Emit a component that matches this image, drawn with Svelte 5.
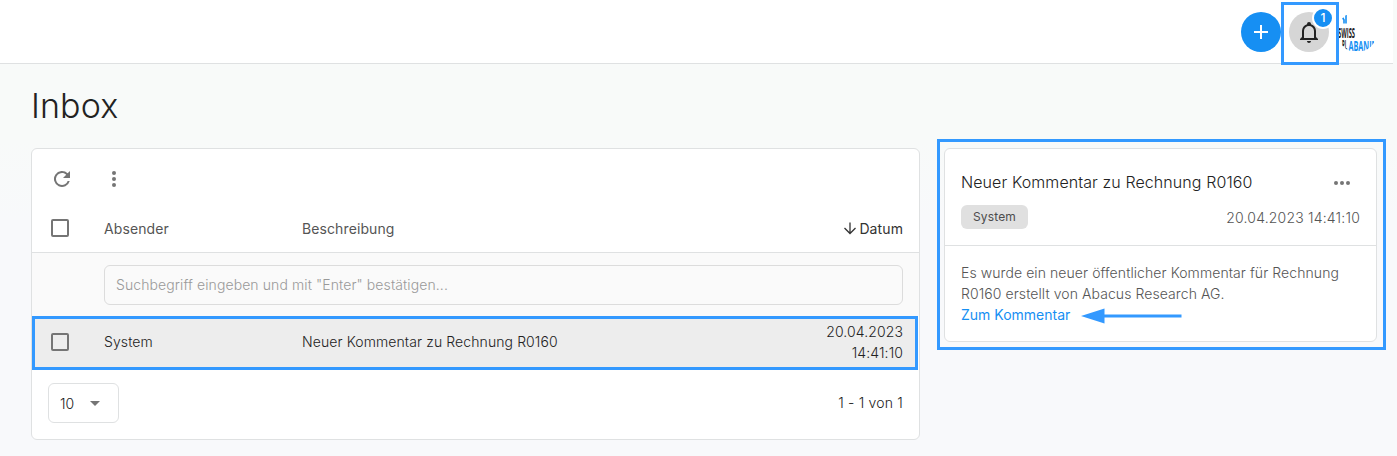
<script>
    const columns = ['Absender', 'Beschreibung'];

    const message = {
        sender: 'System',
        title: 'Neuer Kommentar zu Rechnung R0160',
        date: '20.04.2023',
        time: '14:41:10',
        body: 'Es wurde ein neuer öffentlicher Kommentar für Rechnung R0160 erstellt von Abacus Research AG.',
    };

    let search = '';
</script>

<div class="page">
    <header class="topbar">
        <button class="round add" aria-label="Neu">
            <svg width="40" height="40" viewBox="0 0 40 40">
                <path d="M20 13v14M13 20h14" stroke="#fff" stroke-width="2" />
            </svg>
        </button>
        <div class="bell-frame">
            <button class="round bell" aria-label="Benachrichtigungen">
                <svg width="24" height="24" viewBox="0 0 24 24">
                    <path fill="#222" d="M10 21h4c0 1.1-.9 2-2 2s-2-.9-2-2zM21 19v1H3v-1l2-2v-6c0-3.1 2-5.800 5-6.700V4a2 2 0 0 1 4 0v.3c3 .9 5 3.600 5 6.700v6l2 2zm-4-8a5 5 0 0 0-10 0v7h10v-7z" />
                </svg>
            </button>
            <span class="badge">1</span>
        </div>
        <svg class="logo" width="40" height="40" viewBox="0 0 40 40">
            <path d="M5.500 5.500l1.500 2.500M9 3v8.500M7 7.500v4" stroke="#168ff3" stroke-width="1.600" />
            <text x="1" y="25.500" textLength="17" lengthAdjust="spacingAndGlyphs" fill="#222">SWISS</text>
            <text x="5" y="37.500" textLength="5" lengthAdjust="spacingAndGlyphs" fill="#222">PL</text>
            <text x="11.500" y="38.500" textLength="29" lengthAdjust="spacingAndGlyphs" fill="#168ff3">ABANIN</text>
        </svg>
    </header>

    <main>
        <h1>Inbox</h1>
        <div class="columns">
            <section class="card inbox">
                <div class="toolbar">
                    <svg width="24" height="24" viewBox="0 0 24 24">
                        <path fill="#757575" d="M17.650 6.350A8 8 0 1 0 19.730 14h-2.080A6 6 0 1 1 12 6c1.660 0 3.140.69 4.220 1.780L13 11h7V4l-2.350 2.350z" />
                    </svg>
                    <svg width="24" height="24" viewBox="0 0 24 24" fill="#757575">
                        <circle cx="12" cy="6" r="2" /><circle cx="12" cy="12" r="2" /><circle cx="12" cy="18" r="2" />
                    </svg>
                </div>

                <div class="row head">
                    <span class="checkbox"></span>
                    {#each columns as column}
                        <span>{column}</span>
                    {/each}
                    <span class="date sorted">
                        <svg width="14" height="14" viewBox="0 0 14 14">
                            <path d="M7 1.500v11M1.500 7L7 12.500 12.500 7" fill="none" stroke="#333" stroke-width="1.300" />
                        </svg>
                        Datum
                    </span>
                </div>

                <div class="filter">
                    <input bind:value={search} placeholder={'Suchbegriff eingeben und mit "Enter" bestätigen...'} />
                </div>

                <div class="row entry">
                    <span class="checkbox"></span>
                    <span class="cell">{message.sender}</span>
                    <span class="cell">{message.title}</span>
                    <span class="date">{message.date}<br />{message.time}</span>
                </div>

                <div class="footer">
                    <div class="select">
                        10
                        <svg width="10" height="5" viewBox="0 0 10 5"><path d="M0 0h10L5 5z" fill="#757575" /></svg>
                    </div>
                    <span class="range">1 - 1 von 1</span>
                </div>
            </section>

            <div class="detail-frame">
                <article class="card detail">
                    <div class="detail-head">
                        <div class="line">
                            <h2>{message.title}</h2>
                            <svg class="more" width="18" height="6" viewBox="0 0 18 6" fill="#757575">
                                <circle cx="3" cy="3" r="2" /><circle cx="9" cy="3" r="2" /><circle cx="15" cy="3" r="2" />
                            </svg>
                        </div>
                        <div class="line meta">
                            <span class="chip">{message.sender}</span>
                            <span>{message.date} {message.time}</span>
                        </div>
                    </div>
                    <div class="detail-body">
                        <p>{message.body}</p>
                        <div class="link-line">
                            <a href="#kommentar">Zum Kommentar</a>
                            <svg width="101" height="16" viewBox="0 0 101 16">
                                <path d="M0 8L23.500.5v6h77v3h-77v6z" fill="#3399ff" />
                            </svg>
                        </div>
                    </div>
                </article>
            </div>
        </div>
    </main>
</div>

<style>
    :global(body) {
        background: #f8f9fb;
    }

    .page {
        height: 456px;
        overflow: hidden;
        font-family: Inter, sans-serif;
        font-size: 14px;
        line-height: 21px;
        letter-spacing: 0.1px;
        color: #4a4a4a;
        background: linear-gradient(#f8faf9 0 140px, #f8f9fb 220px);
    }

    .topbar {
        box-sizing: border-box;
        width: 1393px;
        height: 64px;
        padding-right: 16px;
        display: flex;
        justify-content: flex-end;
        align-items: flex-start;
        background: #fff;
        border-bottom: 1px solid #dfe1e2;
    }

    .round {
        width: 40px;
        height: 40px;
        padding: 0;
        border: 0;
        border-radius: 50%;
        display: flex;
        align-items: center;
        justify-content: center;
    }

    .add {
        margin-top: 12px;
        background: #168ff3;
    }

    .bell-frame {
        position: relative;
        z-index: 1;
        box-sizing: border-box;
        width: 58px;
        height: 63px;
        margin-top: 2px;
        padding: 7px 5px;
        border: 3px solid #3399ff;
    }

    .bell {
        background: #d6d6d6;
    }

    .badge {
        position: absolute;
        top: 2px;
        left: 28px;
        width: 18px;
        height: 18px;
        border: 2px solid #fff;
        border-radius: 50%;
        background: #168ff3;
        color: #fff;
        font-size: 12px;
        font-weight: 500;
        line-height: 18px;
        text-align: center;
    }

    .logo {
        margin: 12px 0 0 -2px;
        border-radius: 50%;
        overflow: hidden;
        font: bold 14px "Open Sans", sans-serif;
        letter-spacing: 0;
    }

    main {
        padding: 22px 11px 0 31px;
    }

    h1 {
        margin: 0;
        height: 53px;
        font-size: 34px;
        font-weight: 300;
        line-height: 40px;
        letter-spacing: 0.1px;
        color: #222;
    }

    .columns {
        display: flex;
        align-items: flex-start;
        gap: 17px;
    }

    .card {
        box-sizing: border-box;
        background: #fff;
        border: 1px solid #dfe1e2;
        border-radius: 6px;
    }

    .inbox {
        width: 889px;
        height: 292px;
        margin-top: 9px;
    }

    .toolbar {
        display: flex;
        gap: 28px;
        height: 42px;
        padding: 18px 18px 0;
    }

    .row {
        box-sizing: border-box;
        display: grid;
        grid-template-columns: 53px 198px 1fr 120px;
        align-items: center;
        padding: 0 16px 0 19px;
    }

    .head {
        height: 44px;
        padding-bottom: 5px;
        border-bottom: 1px solid #dfe1e2;
        color: #555;
    }

    .checkbox {
        box-sizing: border-box;
        width: 18px;
        height: 18px;
        border: 2px solid #757575;
        border-radius: 2px;
    }

    .date {
        text-align: right;
    }

    .sorted {
        display: flex;
        align-items: center;
        justify-content: flex-end;
        gap: 2px;
        color: #333;
    }

    .filter {
        height: 63px;
        box-sizing: border-box;
        padding: 12px 16px 0 72px;
        background: #fafafa;
    }

    input {
        box-sizing: border-box;
        width: 100%;
        height: 40px;
        padding: 0 11px 2px;
        border: 1px solid #dcdcdc;
        border-radius: 6px;
        background: transparent;
        font: inherit;
        font-weight: 300;
        letter-spacing: inherit;
    }

    input::placeholder {
        color: #999;
    }

    .entry {
        width: 886px;
        height: 54px;
        padding: 0 12px 2px 16px;
        background: #ededed;
        border: 3px solid #3399ff;
        font-weight: 300;
        color: #222;
    }

    .cell {
        padding-bottom: 2px;
    }

    .footer {
        display: flex;
        justify-content: space-between;
        align-items: center;
        height: 66px;
        padding: 0 16px;
        font-weight: 300;
        color: #222;
    }

    .range {
        padding-bottom: 2px;
        letter-spacing: 0.2px;
    }

    .select {
        box-sizing: border-box;
        display: flex;
        align-items: center;
        gap: 16px;
        width: 71px;
        height: 40px;
        padding: 0 11px;
        border: 1px solid #dfe1e2;
        border-radius: 6px;
    }

    .detail-frame {
        box-sizing: border-box;
        width: 449px;
        height: 211px;
        padding: 6px 5px 5px 4px;
        border: 3px solid #3399ff;
        font-weight: 300;
    }

    .detail {
        width: 433px;
        height: 194px;
    }

    .detail-head {
        box-sizing: border-box;
        height: 97px;
        padding: 20px 16px 0;
        border-bottom: 1px solid #dfe1e2;
    }

    .line {
        display: flex;
        justify-content: space-between;
        align-items: center;
        color: #555;
    }

    h2 {
        margin: 0;
        font-size: 16px;
        font-weight: 300;
        line-height: 26px;
        letter-spacing: 0.09px;
        color: #222;
    }

    .more {
        margin: 2px 9px 0 0;
    }

    .meta {
        margin-top: 10px;
        align-items: flex-start;
    }

    .meta span:last-child {
        margin-top: 2px;
        letter-spacing: 0.19px;
    }

    .chip {
        height: 24px;
        padding: 0 12px;
        border-radius: 6px;
        background: #e0e0e0;
        color: #4d4d4d;
        font-size: 12px;
        font-weight: 400;
        line-height: 24px;
        letter-spacing: 0.14px;
    }

    .detail-body {
        padding: 16px 16px 0;
        letter-spacing: 0.08px;
        color: #555;
    }

    p {
        margin: 0;
    }

    .link-line {
        display: flex;
        align-items: center;
        gap: 11px;
    }

    .link-line svg {
        margin-top: 3px;
    }

    a {
        color: #168ff3;
        font-weight: 400;
        letter-spacing: 0;
        text-decoration: none;
    }
</style>
